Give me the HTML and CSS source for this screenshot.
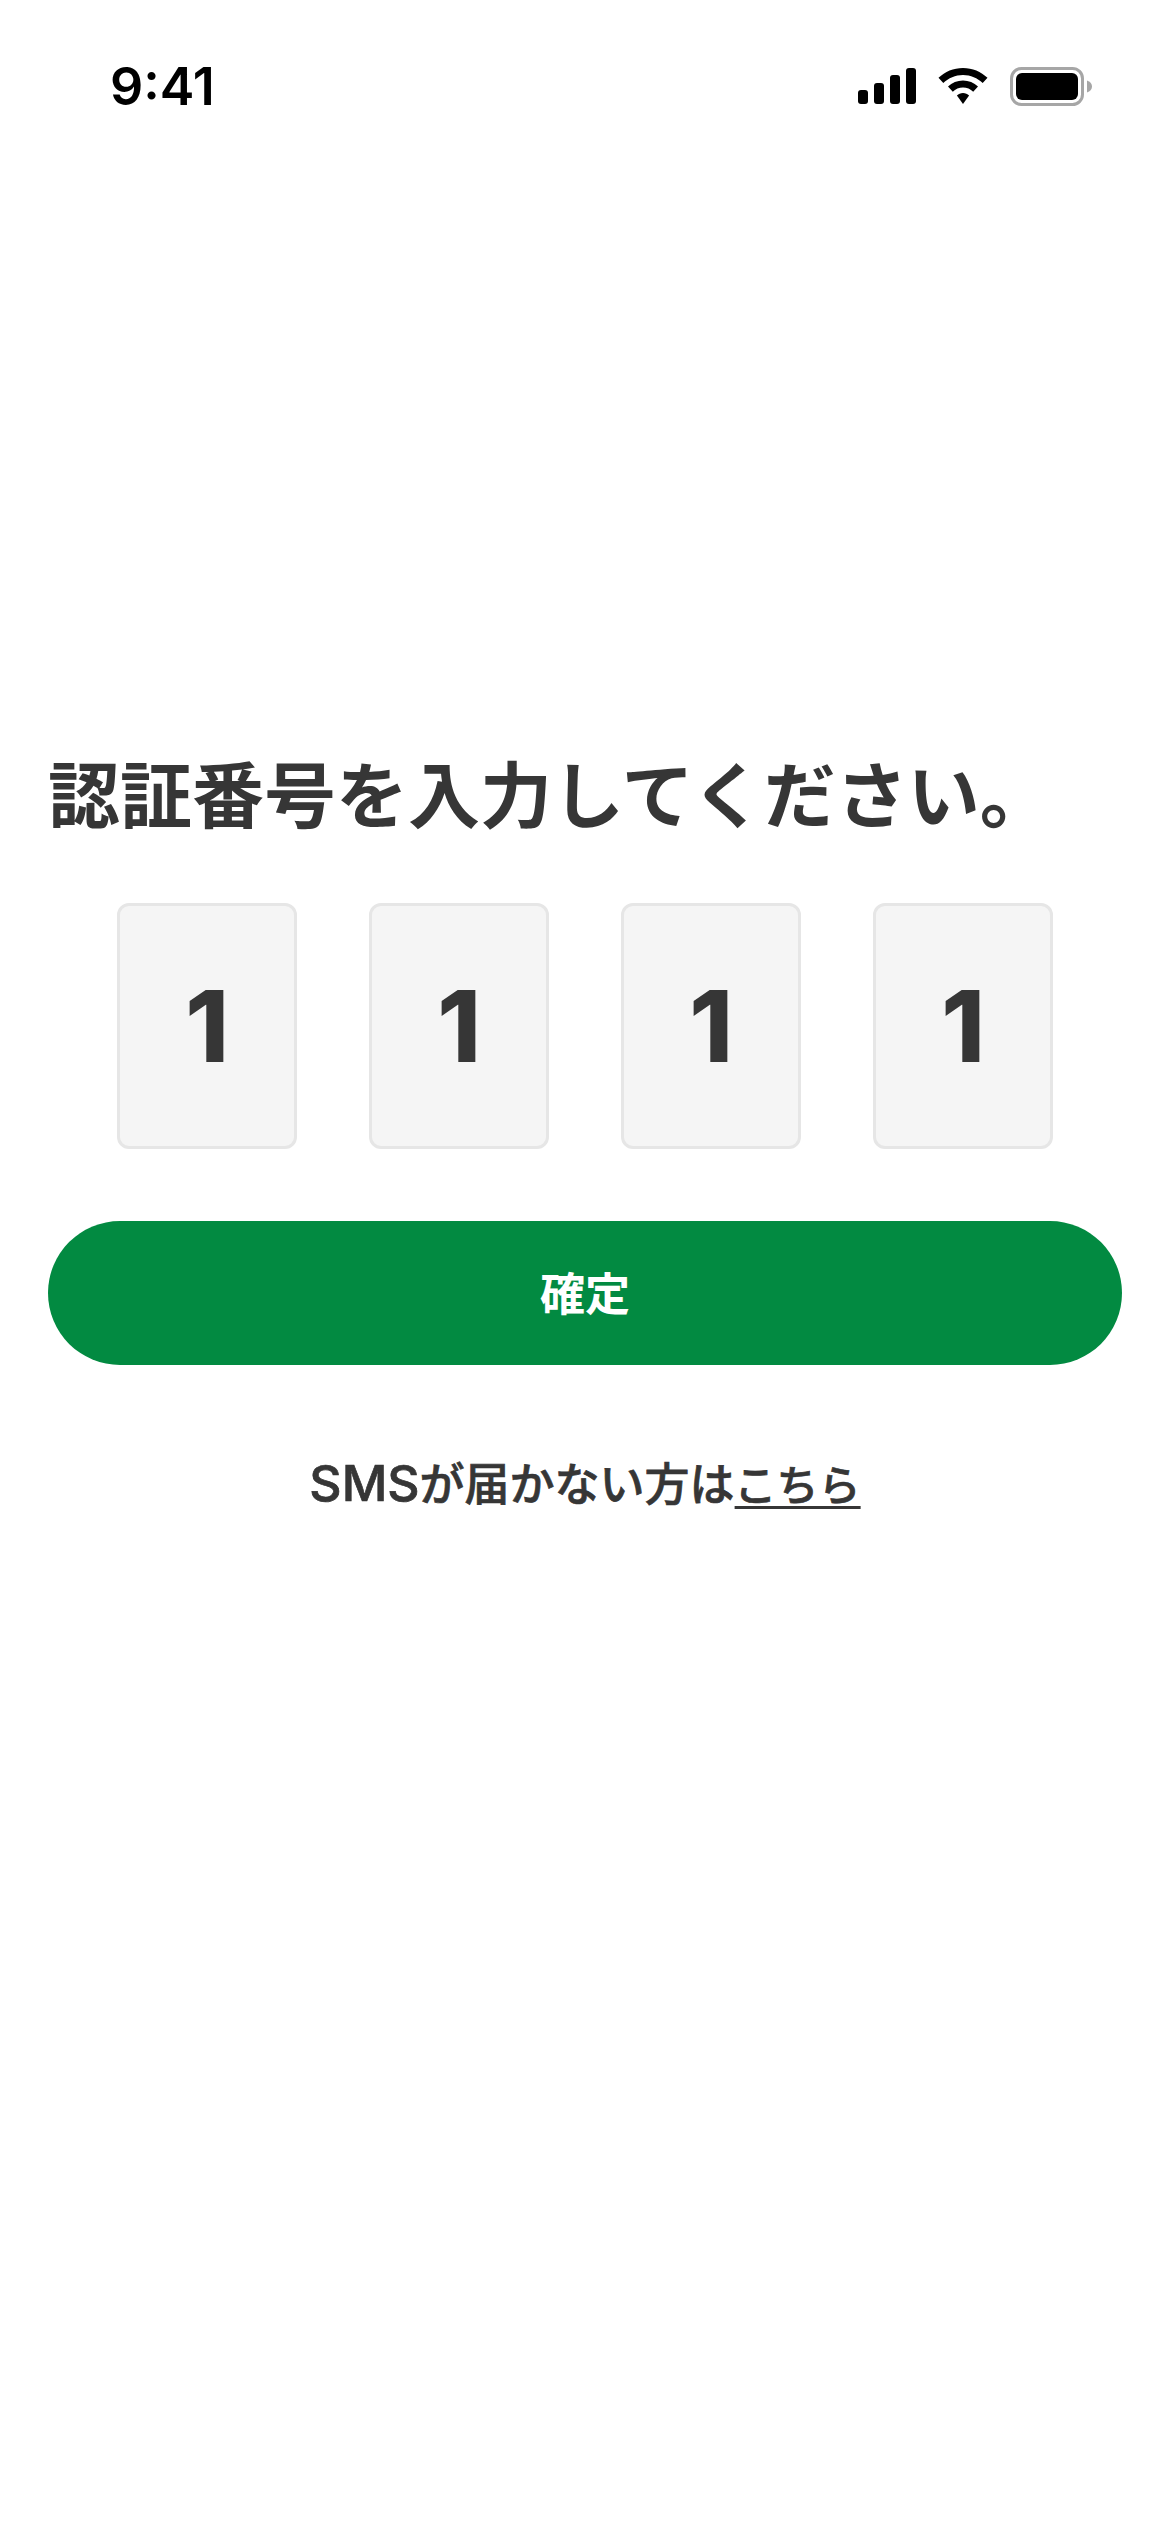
FILE: index.html
```html
<!DOCTYPE html>
<html lang="ja">
<head>
    <meta charset="UTF-8">
    <meta name="viewport" content="width=device-width, initial-scale=1.0">
    <title>認証番号</title>
    <link rel="stylesheet" href="styles.css">
</head>
<body>
    <header class="status-bar">
        <span class="status-time">9:41</span>
        <div class="status-icons">
            <svg class="icon-signal" width="58" height="36" viewBox="0 0 58 36">
                <rect x="0" y="22" width="10" height="14" rx="3"/>
                <rect x="16" y="15" width="10" height="21" rx="3"/>
                <rect x="32" y="7" width="10" height="29" rx="3"/>
                <rect x="48" y="0" width="10" height="36" rx="3"/>
            </svg>
            <svg class="icon-wifi" width="50" height="36" viewBox="0 0 50 36">
                <path d="M25 0C15.500 0 7 3.700 0.500 9.800L5.300 15C10.500 10 17.400 7 25 7S39.500 10 44.700 15L49.500 9.800C43 3.700 34.500 0 25 0Z"/>
                <path d="M25 12.500C19.300 12.500 14 14.700 10 18.500L14.800 23.700C17.500 21.100 21.100 19.500 25 19.500S32.500 21.100 35.200 23.700L40 18.500C36 14.700 30.700 12.500 25 12.500Z"/>
                <path d="M25 25C22.600 25 20.500 25.900 18.900 27.400L25 36L31.100 27.400C29.500 25.900 27.400 25 25 25Z"/>
            </svg>
            <svg class="icon-battery" width="82" height="39" viewBox="0 0 82 39">
                <rect x="1.500" y="1.500" width="71" height="36" rx="10" fill="none" stroke="#a6a6a6" stroke-width="3"/>
                <rect x="6" y="6" width="62" height="27" rx="6"/>
                <path d="M77 13.500C80 14.500 82 16.800 82 19.500S80 24.500 77 25.500Z" fill="#a6a6a6"/>
            </svg>
        </div>
    </header>

    <main class="verify">
        <h1 class="verify-title">認証番号を入力してください。</h1>
        <div class="code-row">
            <div class="code-box">1</div>
            <div class="code-box">1</div>
            <div class="code-box">1</div>
            <div class="code-box">1</div>
        </div>
        <button class="confirm-btn" type="button">確定</button>
        <p class="sms-note"><span class="sms-latin">SMS</span>が届かない方は<a class="sms-link" href="#">こちら</a></p>
    </main>
</body>
</html>
```

FILE: styles.css
```css
/* 認証番号入力 */

* {
    box-sizing: border-box;
}

body {
    margin: 0;
    min-height: 2532px;
    background-color: #fff;
    color: #363636;
    font-family: "Inter", "Noto Sans CJK JP", sans-serif;
}

.status-bar {
    display: flex;
    justify-content: space-between;
    align-items: center;
    height: 172px;
    padding: 0 78px 0 110px;
}

.status-time {
    color: #000;
    font-size: 52px;
    font-weight: 600;
}

.status-icons {
    display: flex;
    align-items: center;
    gap: 22px;
}

.verify {
    display: flex;
    flex-direction: column;
    padding: 582px 48px 0;
}

.verify-title {
    margin: 0 0 65px;
    font-size: 72px;
    font-weight: 700;
    line-height: 84px;
}

.code-row {
    display: flex;
    justify-content: center;
    gap: 72px;
    margin-bottom: 72px;
}

.code-box {
    display: flex;
    justify-content: center;
    align-items: center;
    width: 180px;
    height: 246px;
    border: 3px solid #e6e6e6;
    border-radius: 12px;
    background-color: #f5f5f5;
    font-size: 99px;
    font-weight: 800;
}

.confirm-btn {
    height: 144px;
    padding: 0 0 3px;
    border: 0;
    border-radius: 72px;
    background-color: #028a41;
    color: #fff;
    font-family: inherit;
    font-size: 45px;
    font-weight: 700;
}

.sms-note {
    margin: 88px 0 0;
    font-size: 45px;
    font-weight: 500;
    line-height: 60px;
    text-align: center;
    -webkit-text-stroke: 0.7px #363636;
}

.sms-latin {
    font-size: 50px;
}

.sms-link {
    color: inherit;
    font-size: 42px;
    text-decoration: underline;
    text-underline-offset: 5px;
    text-decoration-thickness: 3px;
}
```
